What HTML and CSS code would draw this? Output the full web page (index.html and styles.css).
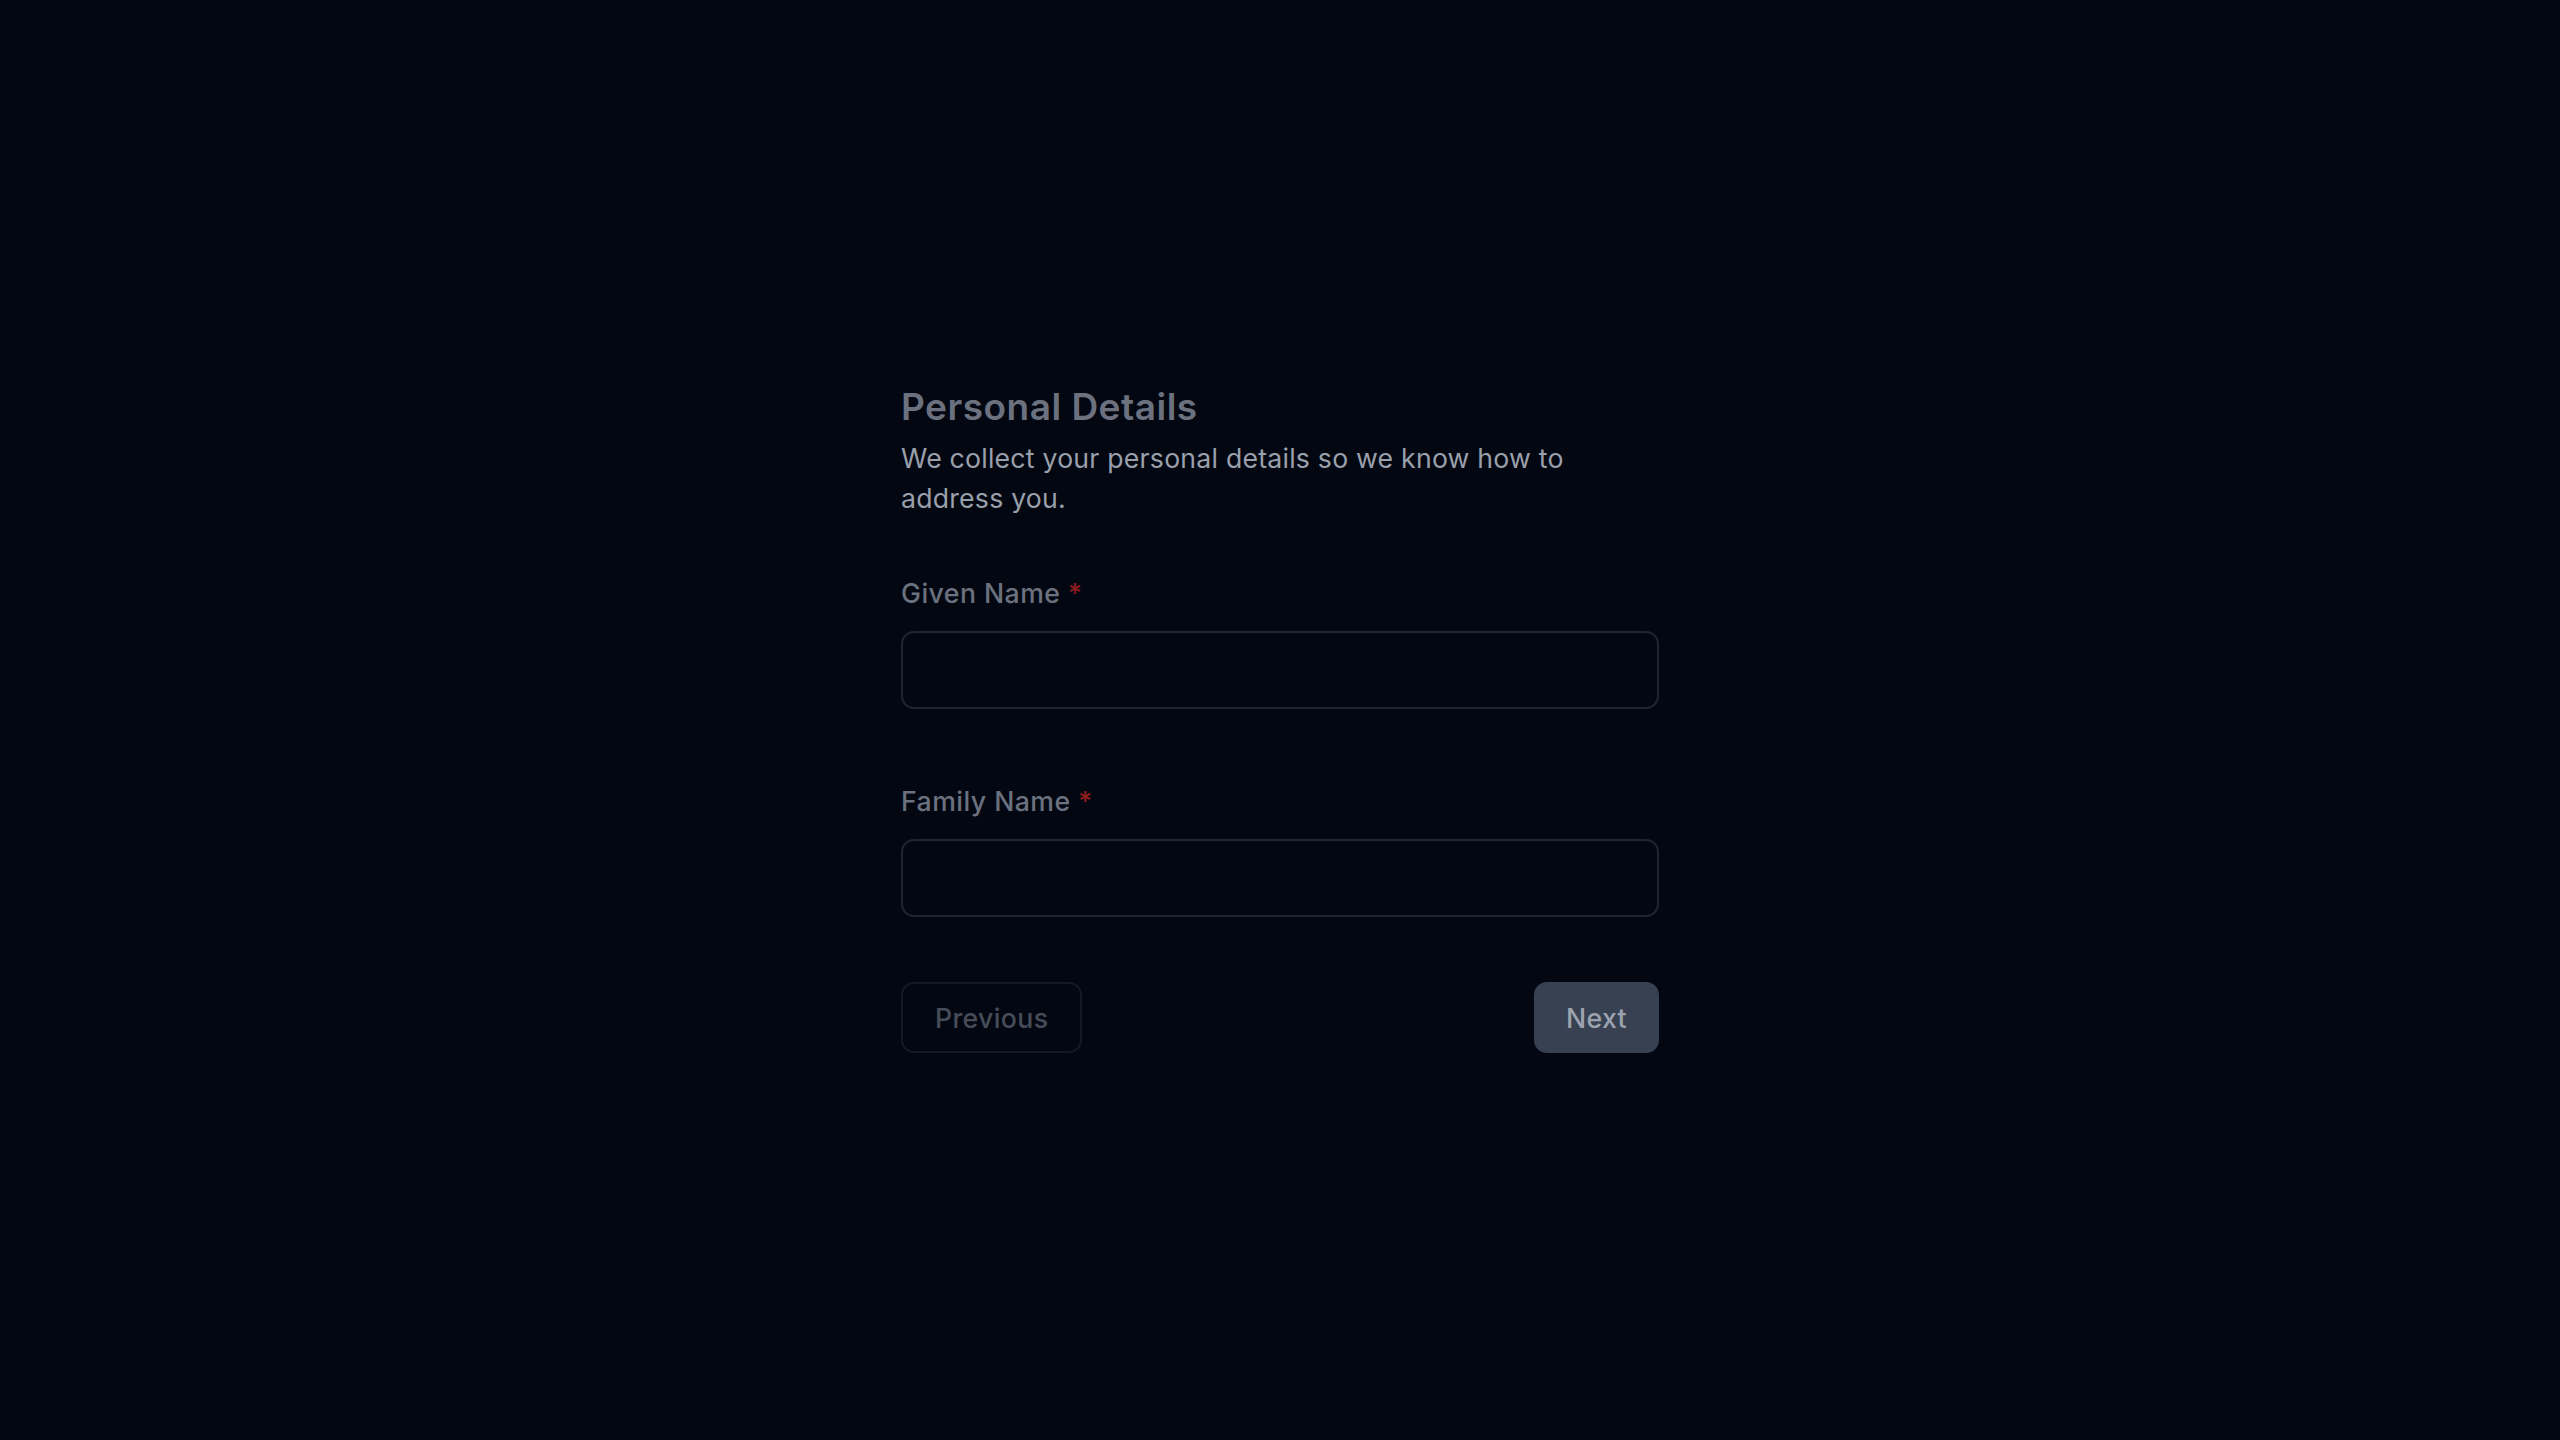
FILE: index.html
```html
<!DOCTYPE html>
<html lang="en">
<head>
<meta charset="utf-8">
<title>Personal Details</title>
<link rel="stylesheet" href="styles.css">
</head>
<body>
<main class="page">
  <form class="step-form">
    <header class="step-head">
      <h1 class="step-title">Personal Details</h1>
      <p class="step-desc">We collect your personal details so we know how to address you.</p>
    </header>
    <div class="fields">
      <div class="field">
        <label class="field-label" for="given">Given Name <span class="req">*</span></label>
        <input class="field-input" id="given" type="text">
      </div>
      <div class="field">
        <label class="field-label" for="family">Family Name <span class="req">*</span></label>
        <input class="field-input" id="family" type="text">
      </div>
    </div>
    <div class="actions">
      <button type="button" class="btn btn-prev" disabled>Previous</button>
      <button type="button" class="btn btn-next">Next</button>
    </div>
  </form>
</main>
</body>
</html>
```

FILE: styles.css
```css
* { box-sizing: border-box; }

html, body {
  margin: 0;
  padding: 0;
  background: #030712;
}

body {
  font-family: Inter, "Noto Sans", "Liberation Sans", sans-serif;
  min-height: 100vh;
}

.page {
  display: flex;
  justify-content: center;
  padding-top: 383px;
}

.step-form {
  width: 758px;
  display: flex;
  flex-direction: column;
}

.step-title {
  margin: 0;
  font-size: 37px;
  line-height: 48px;
  font-weight: 600;
  color: #6b717e;
  letter-spacing: 0.5px;
}

.step-desc {
  margin: 7px 0 0;
  font-size: 26.67px;
  line-height: 40px;
  color: #9aa0ab;
  letter-spacing: 0.22px;
}

.fields {
  display: flex;
  flex-direction: column;
  gap: 72px;
  margin-top: 55px;
}

.field {
  display: flex;
  flex-direction: column;
  gap: 18px;
}

.field-label {
  font-size: 26.67px;
  line-height: 40px;
  font-weight: 500;
  color: #6b717e;
  letter-spacing: 0.45px;
}

.req {
  color: #8b1d1d;
}

.field-input {
  height: 78px;
  width: 100%;
  background: #030712;
  border: 2px solid #1f2632;
  border-radius: 13px;
  font-family: inherit;
  font-size: 26.67px;
  color: #9aa0ab;
  padding: 0 20px;
  outline: none;
}

.actions {
  display: flex;
  justify-content: space-between;
  margin-top: 65px;
}

.btn {
  height: 71px;
  padding: 0 32px;
  border-radius: 13px;
  font-family: inherit;
  font-size: 26.67px;
  line-height: 40px;
  font-weight: 500;
  letter-spacing: 0.35px;
  border: 2px solid transparent;
  cursor: pointer;
}

.btn-prev {
  background: transparent;
  border-color: #141a25;
  color: #464c58;
}

.btn-next {
  padding: 0 30px;
  background: #374151;
  border-color: #374151;
  color: #9ca3af;
}
```
